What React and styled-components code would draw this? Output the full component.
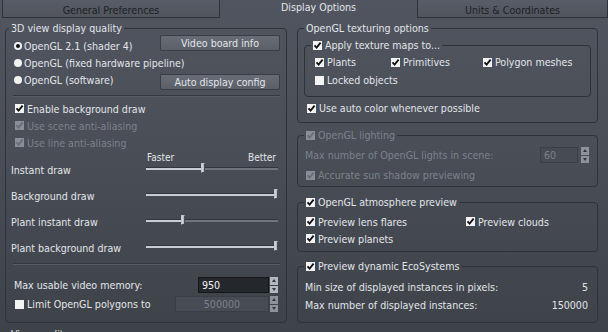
import React from "react";
import styled, { createGlobalStyle, css } from "styled-components";

const FONT = `"DejaVu Sans Condensed", "Liberation Sans", Arial, sans-serif`;
const TEXT = "#e3e5e9";
const DIM = "#7d828b";
const EDGE = "#2f3238";

const GlobalStyle = createGlobalStyle`
    html, body {
        margin: 0;
        padding: 0;
        background: #3f434b;
    }
    * {
        box-sizing: border-box;
    }
`;

const Page = styled.div`
    width: 608px;
    height: 332px;
    overflow: hidden;
    background: linear-gradient(180deg, #50555f 0%, #494e57 45%, #3e4249 100%);
    font-family: ${FONT};
    font-size: 10.6px;
    line-height: 14px;
    color: ${TEXT};
`;

const TabBar = styled.div`
    display: flex;
    height: 18px;
`;

const Tab = styled.div`
    flex: ${p => (p.$grow ? 1 : "none")};
    width: ${p => (p.$w ? `${p.$w}px` : "auto")};
    margin-left: ${p => p.$ml || 0}px;
    display: flex;
    align-items: center;
    justify-content: center;
    ${p =>
        p.$active
            ? css`
                  color: ${TEXT};
                  padding-bottom: 4px;
              `
            : css`
                  color: #1d1f24;
                  background: linear-gradient(180deg, #585d67, #4f545d);
                  border: 1px solid ${EDGE};
                  border-top: none;
                  padding-top: 2px;
              `}
`;

const Body = styled.div`
    display: flex;
    align-items: flex-start;
    gap: 10px;
    padding: 3px 10px 0 5px;
`;

const Column = styled.div`
    flex: none;
    width: ${p => p.$w}px;
    display: flex;
    flex-direction: column;
`;

const Group = styled.fieldset`
    margin: ${p => p.$mt || 0}px 0 0 0;
    min-width: 0;
    border: 1px solid ${EDGE};
    border-radius: 4px;
    padding: ${p => p.$pad};
`;

const Legend = styled.legend`
    display: flex;
    align-items: center;
    gap: 3px;
    padding: 0 2px;
    margin-left: ${p => p.$shift || 0}px;
    line-height: 14px;
    white-space: nowrap;
    color: ${p => (p.$disabled ? DIM : TEXT)};
`;

const OptionsRow = styled.div`
    display: flex;
    justify-content: space-between;
    height: 55px;
`;

const RadioList = styled.div`
    flex: 1;
    min-width: 0;
    display: flex;
    flex-direction: column;
    padding-top: 2px;
`;

const RadioRow = styled.label`
    display: flex;
    align-items: center;
    gap: 2px;
    height: 17px;
    white-space: nowrap;
`;

const RadioDot = styled.span`
    flex: none;
    width: 8px;
    height: 8px;
    border-radius: 50%;
    background: #f2f2f2;
    display: flex;
    align-items: center;
    justify-content: center;
    &::after {
        content: "";
        width: 4px;
        height: 4px;
        border-radius: 50%;
        background: ${p => (p.$on ? "#111" : "transparent")};
    }
`;

const ButtonCol = styled.div`
    flex: none;
    display: flex;
    flex-direction: column;
    justify-content: space-between;
    width: 120px;
`;

const Button = styled.button`
    height: 16px;
    padding: 0;
    border: 1px solid #393d44;
    border-radius: 2px;
    background: linear-gradient(180deg, #676c76, #5a5f68);
    color: ${TEXT};
    font: inherit;
    display: flex;
    align-items: center;
    justify-content: center;
`;

const Rule = styled.div`
    height: 2px;
    margin: ${p => p.$mt}px 0 0 -1px;
    border-top: 1px solid #353840;
    border-bottom: 1px solid #575c66;
`;

const CheckRow = styled.label`
    display: flex;
    align-items: center;
    gap: 3px;
    height: ${p => p.$h || 17}px;
    margin-top: ${p => p.$mt || 0}px;
    margin-left: ${p => p.$ml || 0}px;
    color: ${p => (p.$disabled ? DIM : TEXT)};
    white-space: nowrap;
`;

const Box = styled.span`
    flex: none;
    width: 9px;
    height: 9px;
    background: ${p => (p.$disabled ? "#8a8e96" : "#f3f3f3")};
    display: flex;
    align-items: center;
    justify-content: center;
`;

const Check = ({ on, disabled }) => (
    <Box $disabled={disabled}>
        {on && (
            <svg width="9" height="9" viewBox="0 0 9 9">
                <path
                    d="M1.5 4.3 L3.6 6.6 L7.6 1.6"
                    fill="none"
                    stroke={disabled ? "#6a6e76" : "#111"}
                    strokeWidth="1.8"
                />
            </svg>
        )}
    </Box>
);

const CheckItem = ({ on, disabled, children, ...rest }) => (
    <CheckRow $disabled={disabled} {...rest}>
        <Check on={on} disabled={disabled} />
        {children}
    </CheckRow>
);

const Scale = styled.div`
    display: flex;
    justify-content: space-between;
    height: 12px;
    margin: 1px 4px -7px 133px;
    font-size: 10px;
    line-height: 12px;
`;

const SliderRow = styled.div`
    display: flex;
    align-items: center;
    height: 26px;
`;

const SliderLabel = styled.span`
    flex: none;
    width: 135px;
    margin-left: -3px;
`;

const Track = styled.div`
    position: relative;
    flex: 1;
    height: 3px;
    margin: 0 2px 3px 0;
    background: #6f747d;
    border-top: 1px solid #33363c;
`;

const Fill = styled.div`
    height: 100%;
    background: #c8ccd3;
`;

const Thumb = styled.div`
    position: absolute;
    top: -5px;
    width: 4px;
    height: 10px;
    background: linear-gradient(90deg, #e0e2e6, #a7abb2);
    border: 1px solid #4a4e55;
    border-top-color: #c0c3c9;
    border-left-color: #c0c3c9;
`;

const Slider = ({ label, value }) => (
    <SliderRow>
        <SliderLabel>{label}</SliderLabel>
        <Track>
            <Fill style={{ width: `${Math.round(value * 128) + 2}px` }} />
            <Thumb style={{ left: `${Math.round(value * 128)}px` }} />
        </Track>
    </SliderRow>
);

const FieldRow = styled.div`
    display: flex;
    align-items: center;
    justify-content: space-between;
    height: ${p => p.$h || 16}px;
    margin-top: ${p => p.$mt || 0}px;
    color: ${p => (p.$disabled ? DIM : TEXT)};
`;

const FieldLabel = styled.span`
    margin-left: ${p => p.$ml || 0}px;
    white-space: nowrap;
`;

const Spin = styled.div`
    flex: none;
    display: flex;
    gap: ${p => p.$gap}px;
    width: ${p => p.$w}px;
    height: 16px;
    margin-right: 2px;
`;

const Field = styled.div`
    flex: 1;
    display: flex;
    align-items: center;
    justify-content: ${p => p.$align || "flex-start"};
    padding: 0 3px;
    background: ${p => (p.$disabled ? "#474b53" : "#24272c")};
    border: 1px solid ${p => (p.$disabled ? "#3a3e45" : "#15171a")};
    color: ${p => (p.$disabled ? DIM : "#f2f3f5")};
`;

const Arrows = styled.div`
    flex: none;
    width: 8px;
    display: flex;
    flex-direction: column;
    gap: 1px;
`;

const Arrow = styled.div`
    flex: 1;
    display: flex;
    align-items: center;
    justify-content: center;
    background: ${p => (p.$disabled ? "#8e929a" : "#b4b8bf")};
    &::after {
        content: "";
        border-left: 2.5px solid transparent;
        border-right: 2.5px solid transparent;
        ${p =>
            p.$down
                ? css`border-top: 3px solid #34373d;`
                : css`border-bottom: 3px solid #34373d;`}
    }
`;

const SpinField = ({ value, w, gap = 1, align, disabled }) => (
    <Spin $w={w} $gap={gap}>
        <Field $align={align} $disabled={disabled}>
            {value}
        </Field>
        <Arrows>
            <Arrow $disabled={disabled} />
            <Arrow $disabled={disabled} $down />
        </Arrows>
    </Spin>
);

const Grid = styled.div`
    display: grid;
    grid-template-columns: ${p => p.$cols};
    grid-auto-rows: ${p => p.$row}px;
    margin-left: ${p => p.$ml || 0}px;
    align-items: center;
`;

const Value = styled.span`
    margin-right: 3px;
`;

const Footer = styled.div`
    margin: 4px 0 0 6px;
`;

const radios = [
    { label: "OpenGL 2.1 (shader 4)", on: true },
    { label: "OpenGL (fixed hardware pipeline)", on: false },
    { label: "OpenGL (software)", on: false },
];

const sliders = [
    { label: "Instant draw", value: 0.43 },
    { label: "Background draw", value: 1 },
    { label: "Plant instant draw", value: 0.273 },
    { label: "Plant background draw", value: 1 },
];

const App = () => (
    <Page>
        <GlobalStyle />
        <TabBar>
            <Tab $w={218} $ml={2}>General Preferences</Tab>
            <Tab $w={197} $active>Display Options</Tab>
            <Tab $grow>Units &amp; Coordinates</Tab>
        </TabBar>
        <Body>
            <Column $w={282}>
                <Group $pad="0 6px 10px 8px">
                    <Legend $shift={-5}>3D view display quality</Legend>
                    <OptionsRow>
                        <RadioList>
                            {radios.map(r => (
                                <RadioRow key={r.label}>
                                    <RadioDot $on={r.on} />
                                    {r.label}
                                </RadioRow>
                            ))}
                        </RadioList>
                        <ButtonCol>
                            <Button>Video board info</Button>
                            <Button>Auto display config</Button>
                        </ButtonCol>
                    </OptionsRow>
                    <Rule $mt={5} />
                    <CheckItem on $mt={3} $ml={1}>
                        Enable background draw
                    </CheckItem>
                    <CheckItem on disabled $ml={1}>
                        Use scene anti-aliasing
                    </CheckItem>
                    <CheckItem on disabled $ml={1}>
                        Use line anti-aliasing
                    </CheckItem>
                    <Scale>
                        <span>Faster</span>
                        <span>Better</span>
                    </Scale>
                    {sliders.map(s => (
                        <Slider key={s.label} label={s.label} value={s.value} />
                    ))}
                    <Rule $mt={2} />
                    <FieldRow $mt={12}>
                        <FieldLabel>Max usable video memory:</FieldLabel>
                        <SpinField value="950" w={80} />
                    </FieldRow>
                    <FieldRow $mt={3}>
                        <CheckItem $ml={1} $h={16}>
                            Limit OpenGL polygons to
                        </CheckItem>
                        <SpinField value="500000" w={103} align="center" disabled />
                    </FieldRow>
                </Group>
                <Footer>View quality</Footer>
            </Column>
            <Column $w={301}>
                <Group $pad="0 6px 6px 6px">
                    <Legend>OpenGL texturing options</Legend>
                    <Group $mt={3} $pad="1px 0 7px 10px">
                        <Legend $shift={-4}>
                            <Check on />
                            Apply texture maps to...
                        </Legend>
                        <Grid $cols="76px 92px auto" $row={18}>
                            <CheckItem on>Plants</CheckItem>
                            <CheckItem on>Primitives</CheckItem>
                            <CheckItem on>Polygon meshes</CheckItem>
                            <CheckItem>Locked objects</CheckItem>
                        </Grid>
                    </Group>
                    <CheckItem on $mt={3} $ml={3} $h={16}>
                        Use auto color whenever possible
                    </CheckItem>
                </Group>
                <Group $mt={5} $pad="5px 6px 3px 6px">
                    <Legend $disabled>
                        <Check on disabled />
                        OpenGL lighting
                    </Legend>
                    <FieldRow $disabled>
                        <FieldLabel $ml={1}>Max number of OpenGL lights in scene:</FieldLabel>
                        <SpinField value="60" w={49} gap={3} disabled />
                    </FieldRow>
                    <CheckItem on disabled $mt={4} $ml={2} $h={16}>
                        Accurate sun shadow previewing
                    </CheckItem>
                </Group>
                <Group $mt={8} $pad="4px 6px 4px 6px">
                    <Legend>
                        <Check on />
                        OpenGL atmosphere preview
                    </Legend>
                    <Grid $cols="160px auto" $row={17} $ml={2}>
                        <CheckItem on>Preview lens flares</CheckItem>
                        <CheckItem on>Preview clouds</CheckItem>
                        <CheckItem on>Preview planets</CheckItem>
                    </Grid>
                </Group>
                <Group $mt={7} $pad="5px 6px 8px 6px">
                    <Legend>
                        <Check on />
                        Preview dynamic EcoSystems
                    </Legend>
                    <FieldRow $h={18}>
                        <FieldLabel $ml={1}>Min size of displayed instances in pixels:</FieldLabel>
                        <Value>5</Value>
                    </FieldRow>
                    <FieldRow $h={18}>
                        <FieldLabel $ml={1}>Max number of displayed instances:</FieldLabel>
                        <Value>150000</Value>
                    </FieldRow>
                </Group>
            </Column>
        </Body>
    </Page>
);

export default App;
